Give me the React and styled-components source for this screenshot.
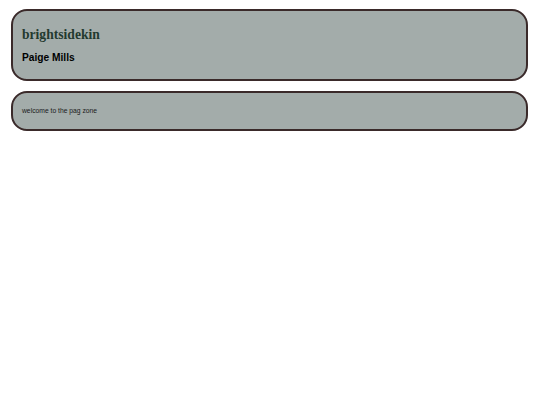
import React from "react";
import styled, { createGlobalStyle } from "styled-components";

const Global = createGlobalStyle`
  html, body { margin: 0; padding: 0; background: #ffffff; }
  body { font-family: "Liberation Sans", Arial, sans-serif; }
`;

const Page = styled.div`
  display: flex;
  flex-direction: column;
  gap: 10px;
  padding: 9px 12px 0 11px;
`;

const Panel = styled.section`
  box-sizing: border-box;
  height: ${(p) => p.$h}px;
  background: #a3acaa;
  border: 2px solid #3a2a2a;
  border-radius: 16px;
  padding: ${(p) => p.$pad};
  display: flex;
  flex-direction: column;
  justify-content: ${(p) => p.$justify || "flex-start"};
`;

const Brand = styled.h1`
  margin: 0;
  font-family: "Liberation Serif", "Times New Roman", serif;
  font-weight: bold;
  font-size: 13.6px;
  line-height: 16px;
  color: #233a2f;
`;

const Name = styled.h2`
  margin: 8px 0 0;
  font-family: "Liberation Sans", Arial, sans-serif;
  font-weight: bold;
  font-size: 10.2px;
  line-height: 14px;
  color: #000;
`;

const Welcome = styled.p`
  margin: 0;
  font-family: "Liberation Sans", Arial, sans-serif;
  font-size: 6.75px;
  line-height: 10px;
  color: #1a1a1a;
`;

export default function App() {
  return (
    <>
      <Global />
      <Page>
        <Panel $h={72} $pad="16px 9px 0">
          <Brand>brightsidekin</Brand>
          <Name>Paige Mills</Name>
        </Panel>
        <Panel $h={40} $pad="0 9px" $justify="center">
          <Welcome>welcome to the pag zone</Welcome>
        </Panel>
      </Page>
    </>
  );
}
